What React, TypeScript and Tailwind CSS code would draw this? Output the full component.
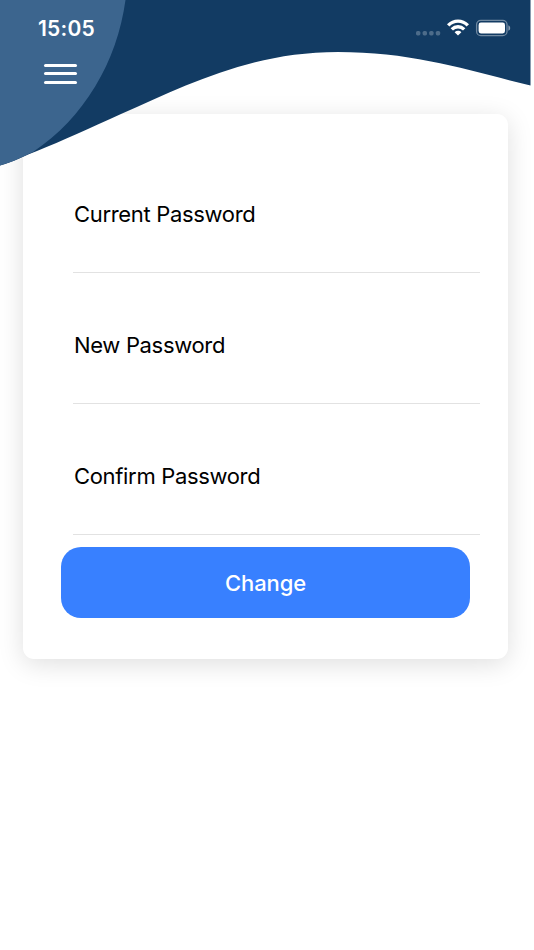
import React from "react";

const fields = ["Current Password", "New Password", "Confirm Password"];

function HeaderWave() {
  return (
    <svg
      className="absolute left-0 top-0 z-10 pointer-events-none"
      width="534"
      height="170"
      viewBox="0 0 534 170"
      fill="none"
    >
      <path
        d="M0 0H530.5V85.5C470 71 415 52 338 52C250 52 185 86 121 114C90 128 62 141 37 151C25 155 14 162 0 165.5Z"
        fill="#123B63"
      />
      <path
        d="M0 0H125.5C117 62 84 118 33 152C22 157 13 162 0 165.5Z"
        fill="#3C658E"
      />
    </svg>
  );
}

function StatusIcons() {
  return (
    <svg width="96" height="20" viewBox="0 0 96 20" fill="none">
      <g fill="#fff" fillOpacity="0.25">
        <rect x="1" y="13" width="4.4" height="4.4" rx="1.6" />
        <rect x="7.6" y="13" width="4.4" height="4.4" rx="1.6" />
        <rect x="14.2" y="13" width="4.4" height="4.4" rx="1.6" />
        <rect x="20.8" y="13" width="4.4" height="4.4" rx="1.6" />
      </g>
      <g stroke="#fff" strokeWidth="3.4">
        <path d="M33.2 7.4C38.8 1.7 47.2 1.7 52.8 7.4" />
        <path d="M36.8 11.4C40.4 7.9 45.6 7.9 49.2 11.4" />
      </g>
      <path d="M39.6 14.2C41.6 12.3 44.4 12.3 46.4 14.2L43 17.6Z" fill="#fff" />
      <rect
        x="61.6"
        y="2.4"
        width="30.4"
        height="15.2"
        rx="4.2"
        stroke="#fff"
        strokeOpacity="0.4"
        strokeWidth="1.3"
      />
      <rect x="63.6" y="4.6" width="26.4" height="10.8" rx="2.3" fill="#fff" />
      <path d="M93.4 7.2C95.8 8.3 95.8 11.7 93.4 12.8Z" fill="#fff" fillOpacity="0.5" />
    </svg>
  );
}

export default function App() {
  return (
    <div className="relative w-full h-[950px] overflow-hidden bg-white font-['Inter',sans-serif]">
      <HeaderWave />

      <div className="relative z-20 h-[114px] text-white">
        <div className="flex justify-between items-start pt-4 pl-[38px] pr-[23px]">
          <p className="text-[21px] leading-[25px] font-semibold tracking-[0.2px]">15:05</p>
          <div className="pt-0.5">
            <StatusIcons />
          </div>
        </div>
        <button className="flex flex-col gap-[5.3px] mt-[23px] ml-11 w-[33px]" aria-label="Menu">
          <span className="w-full h-[3px] rounded-full bg-white"></span>
          <span className="w-full h-[3px] rounded-full bg-white"></span>
          <span className="w-full h-[3px] rounded-full bg-white"></span>
        </button>
      </div>

      <div className="ml-[23px] w-[485px] h-[545px] pt-7 rounded-[11px] bg-white shadow-[0_5px_26px_rgba(0,0,0,0.13)]">
        {fields.map((label) => (
          <div
            key={label}
            className="ml-[50px] w-[407px] h-[131px] pt-[59px] pl-px border-b border-[#e2e2e2]"
          >
            <p className="text-[22px] leading-[26px] tracking-[-0.33px] text-black">{label}</p>
          </div>
        ))}
        <button className="block mt-3 ml-[38px] w-[409px] h-[71px] pt-0.5 rounded-[20px] bg-[#3880FF] text-[22px] font-medium tracking-[-0.1px] text-white">
          Change
        </button>
      </div>
    </div>
  );
}
